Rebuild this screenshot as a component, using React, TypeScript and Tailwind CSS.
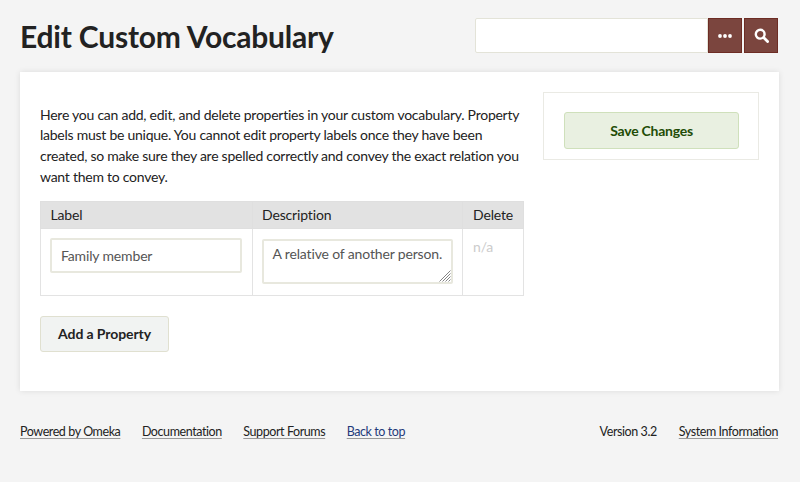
export default function App() {
  return (
    <div className="min-h-[482px] bg-[#f4f4f4] px-5 font-['Lato',sans-serif] text-[14px] leading-[21px] text-[#222]">
      <header className="flex h-[72px] items-start justify-between pr-0.5">
        <h1 className="mt-[17px] text-[30px] font-bold leading-[38px] tracking-[-0.2px] text-[#222]">Edit Custom Vocabulary</h1>
        <div className="mt-[18px] flex h-[35px]">
          <input className="h-full w-[233px] rounded-l-[2px] border border-[#e3e3d8] bg-white" />
          <button className="flex h-full w-[34px] items-center justify-center border border-[#6d2c24] bg-[#7b453e]">
            <svg width="14" height="4" viewBox="0 0 14 4" fill="white">
              <circle cx="2" cy="2" r="1.9" />
              <circle cx="7" cy="2" r="1.9" />
              <circle cx="12" cy="2" r="1.9" />
            </svg>
          </button>
          <button className="ml-0.5 flex h-full w-[34px] items-center justify-center border border-[#6d2c24] bg-[#7b453e]">
            <svg width="15" height="15" viewBox="0 0 15 15" fill="none" stroke="white">
              <circle cx="6.2" cy="6.2" r="4.4" strokeWidth="2.4" />
              <path d="M9.6 9.6 13.6 13.6" strokeWidth="2.8" strokeLinecap="round" />
            </svg>
          </button>
        </div>
      </header>

      <main className="flex h-[319px] w-[759px] justify-between bg-white p-5 shadow-[0_0_6px_rgba(0,0,0,0.1)]">
        <section className="w-[484px]">
          <p className="mt-[12.5px] w-[484px] leading-[20.8px] tracking-[-0.25px]">
            Here you can add, edit, and delete properties in your custom vocabulary. Property labels must be unique. You cannot edit property labels once they have been created, so make sure they are spelled correctly and convey the exact relation you want them to convey.
          </p>
          <table className="mt-[13.5px] w-[484px] table-fixed border-collapse tracking-[-0.15px]">
            <thead>
              <tr className="h-[27px] bg-[#e2e2e2] text-left">
                <th className="w-[211.5px] border border-[#dfdfdf] pb-px pl-[9.5px] pr-2 font-normal">Label</th>
                <th className="w-[210px] border border-[#dfdfdf] pb-px pl-[9.5px] pr-2 font-normal">Description</th>
                <th className="border border-[#dfdfdf] pb-px pl-[10.5px] pr-1 font-normal">Delete</th>
              </tr>
            </thead>
            <tbody>
              <tr className="h-[67px]">
                <td className="border border-[#e3e3e3] pb-[21px] pl-[9px] pr-1 pt-[9px] align-top">
                  <input
                    readOnly
                    value="Family member"
                    className="block h-[35px] w-[192px] rounded-[2px] border-2 border-[#e8e8de] pl-[9px] pr-2 tracking-[-0.15px] text-[#555]"
                  />
                </td>
                <td className="border border-[#e3e3e3] pl-[9px] pr-2 pt-2.5 align-top">
                  <div className="relative h-[45px] w-[191px]">
                    <textarea
                      readOnly
                      value="A relative of another person."
                      className="block h-full w-full resize-none rounded-[2px] border-2 border-[#e8e8de] py-0.5 pl-[9px] pr-1 tracking-[-0.15px] text-[#555]"
                    />
                    <svg className="absolute bottom-[2px] right-[2px]" width="12" height="12" viewBox="0 0 12 12" stroke="#666" strokeWidth="0.8">
                      <path d="M0.5 11.5 11.5 0.5M3.5 11.5 11.5 3.5M6.5 11.5 11.5 6.5M9.5 11.5 11.5 9.5" />
                    </svg>
                  </div>
                </td>
                <td className="border border-[#e3e3e3] pl-[10.5px] pr-1 pt-[7px] align-top text-[#ccc]">n/a</td>
              </tr>
            </tbody>
          </table>
          <button className="mt-5 h-[36px] w-[129px] rounded-[3px] border border-[#e0e0d0] bg-[#f1f3f2] pb-0.5 font-bold tracking-[-0.1px] text-[#222]">
            Add a Property
          </button>
        </section>
        <aside className="h-[68px] w-[216px] border border-[#eaeae4] px-5 py-[19px]">
          <button className="h-[37px] w-[175px] rounded-[3px] border border-[#cfe0bb] bg-[#e9f0e1] font-bold tracking-[-0.25px] text-[#224c06]">
            Save Changes
          </button>
        </aside>
      </main>

      <footer className="mt-[31px] flex w-[759px] justify-between text-[12.5px] leading-5 tracking-[-0.42px]">
        <div className="flex gap-[21.5px]">
          <a className="underline decoration-[#999] underline-offset-2">Powered by Omeka</a>
          <a className="underline decoration-[#999] underline-offset-2">Documentation</a>
          <a className="underline decoration-[#999] underline-offset-2">Support Forums</a>
          <a className="text-[#1f3a7a] underline decoration-[#999] underline-offset-2">Back to top</a>
        </div>
        <div className="flex gap-[22px] pr-px">
          <span>Version 3.2</span>
          <a className="underline decoration-[#999] underline-offset-2">System Information</a>
        </div>
      </footer>
    </div>
  );
}
